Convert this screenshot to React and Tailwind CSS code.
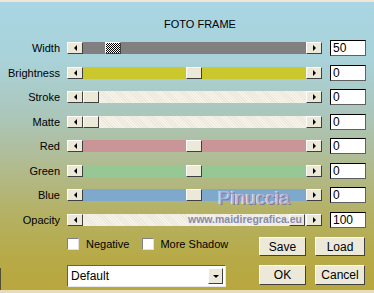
import React from "react";

const rows = [
  { label: "Width", track: "bg-[#808080]", thumb: 22, checker: true, value: "50" },
  { label: "Brightness", track: "bg-[#cbc82e]", thumb: 103, value: "0" },
  { label: "Stroke", track: "bg-[#f5f3e8]", thumb: 0, hatch: true, value: "0" },
  { label: "Matte", track: "bg-[#f5f3e8]", thumb: 0, hatch: true, value: "0" },
  { label: "Red", track: "bg-[#c99597]", thumb: 103, value: "0" },
  { label: "Green", track: "bg-[#96c794]", thumb: 103, value: "0" },
  { label: "Blue", track: "bg-[#7ea9cc]", thumb: 103, value: "0" },
  { label: "Opacity", track: "bg-[#f5f3e8]", thumb: 206, hatch: true, value: "100" },
];

function ArrowBtn({ dir }) {
  return (
    <div className="w-[16px] h-full bg-[#ece9d8] border-t border-l border-t-white border-l-white border-r border-b border-r-[#404040] border-b-[#404040] flex items-center justify-center shrink-0">
      {dir === "left" ? (
        <div className="w-0 h-0 border-y-[3px] border-y-transparent border-r-[3px] border-r-black" />
      ) : (
        <div className="w-0 h-0 border-y-[3px] border-y-transparent border-l-[3px] border-l-black" />
      )}
    </div>
  );
}

function Slider({ r }) {
  return (
    <div className="flex w-[255px] h-[12px]">
      <ArrowBtn dir="left" />
      <div
        className={`relative flex-1 h-full ${r.track} ${
          r.hatch
            ? "bg-[repeating-linear-gradient(45deg,#f6f4ea_0px,#f6f4ea_1px,#ece9dc_1px,#ece9dc_2px)]"
            : ""
        }`}
      >
        <div
          className={`absolute top-0 h-full w-[16px] border-t border-l border-t-white border-l-white border-r border-b border-r-[#404040] border-b-[#404040] ${
            r.checker
              ? "bg-[repeating-conic-gradient(#000_0_25%,#fff_0_50%)] bg-size-[2px_2px]"
              : "bg-[#ece9d8]"
          }`}
          style={{ left: r.thumb }}
        />
      </div>
      <ArrowBtn dir="right" />
    </div>
  );
}

function Box({ v }) {
  return (
    <div className="w-[36px] h-[16px] bg-white border-t border-l border-t-black border-l-black border-r border-b border-r-[#606060] border-b-[#606060] pl-[2px] text-[12px] leading-[14px]">
      {v}
    </div>
  );
}

function Btn({ children, w, h }) {
  return (
    <div
      className={`${w} ${h} bg-[#ece9d8] border-t border-l border-t-white border-l-white border-r border-b border-r-[#404040] border-b-[#404040] flex items-center justify-center text-[12px]`}
    >
      {children}
    </div>
  );
}

function Check() {
  return (
    <div className="w-[12px] h-[12px] shrink-0 bg-white border-t border-l border-t-[#808080] border-l-[#808080] border-r border-b border-r-[#e0e0e0] border-b-[#e0e0e0]" />
  );
}

export default function App() {
  return (
    <div className="relative w-[374px] h-[293px] overflow-hidden font-['Liberation_Sans',Arial,sans-serif] text-black text-[11px] bg-[linear-gradient(180deg,#a8d6e3_0%,#a9d2d9_20%,#abc7bd_38%,#b0bc94_55%,#b4b268_72%,#b7aa48_88%,#b9a73f_100%)] border-t-2 border-t-[#f1e5d6] border-b-[3px] border-b-[#e6dcb8]">
      <div className="h-[14px] mt-[15px] pl-[26px] text-center text-[11px] leading-[14px]">
        FOTO FRAME
      </div>
      <div className="mt-[5px] flex flex-col">
        {rows.map((r) => (
          <div key={r.label} className="h-[24.5px] flex items-center">
            <div className="w-[60px] text-right text-[11px]">{r.label}</div>
            <div className="ml-[7px]">
              <Slider r={r} />
            </div>
            <div className="ml-[8px]">
              <Box v={r.value} />
            </div>
          </div>
        ))}
      </div>
      <div className="flex pt-[5px]">
        <div className="ml-[67px] w-[159px] flex flex-col">
          <div className="h-[12px] mt-[1px] flex items-center text-[11px] whitespace-nowrap">
            <Check />
            <span className="ml-[7px]">Negative</span>
            <div className="ml-[13px]">
              <Check />
            </div>
            <span className="ml-[6px]">More Shadow</span>
          </div>
          <div className="mt-[15px] h-[22px] bg-white border-t border-l border-t-[#606060] border-l-[#606060] border-r border-b border-r-[#e8e8e8] border-b-[#e8e8e8] flex items-center justify-between pl-[3px] pr-[2px] text-[12px]">
            <span>Default</span>
            <div className="w-[15px] h-[16px] bg-[#ece9d8] border-t border-l border-t-white border-l-white border-r border-b border-r-[#404040] border-b-[#404040] flex items-center justify-center">
              <div className="w-0 h-0 border-x-[3px] border-x-transparent border-t-[3px] border-t-black" />
            </div>
          </div>
        </div>
        <div className="ml-[33px] grid grid-cols-[47px_50px] gap-x-[9px] gap-y-[6px]">
          <Btn w="w-[47px]" h="h-[19px]">Save</Btn>
          <Btn w="w-[50px]" h="h-[19px]">Load</Btn>
          <Btn w="w-[47px]" h="h-[20px]">OK</Btn>
          <Btn w="w-[50px]" h="h-[20px]">Cancel</Btn>
        </div>
      </div>
      <div className="absolute left-0 top-[266px] w-[1px] h-[22px] bg-[#505030]" />
      <div className="absolute left-[218px] top-[185px] text-[19px] leading-[22px] font-['Liberation_Sans',sans-serif] text-[#aeb2d6] [text-shadow:1px_1px_0_#7c7c9c,-1px_0_0_#e8e8f4]">
        Pinuccia
      </div>
      <div className="absolute left-[188px] top-[211px] text-[10.5px] leading-[12px] font-bold font-['Liberation_Sans',sans-serif] text-[#8a8aa6] [text-shadow:1px_1px_0_#e8e8f2]">
        www.maidiregrafica.eu
      </div>
    </div>
  );
}
